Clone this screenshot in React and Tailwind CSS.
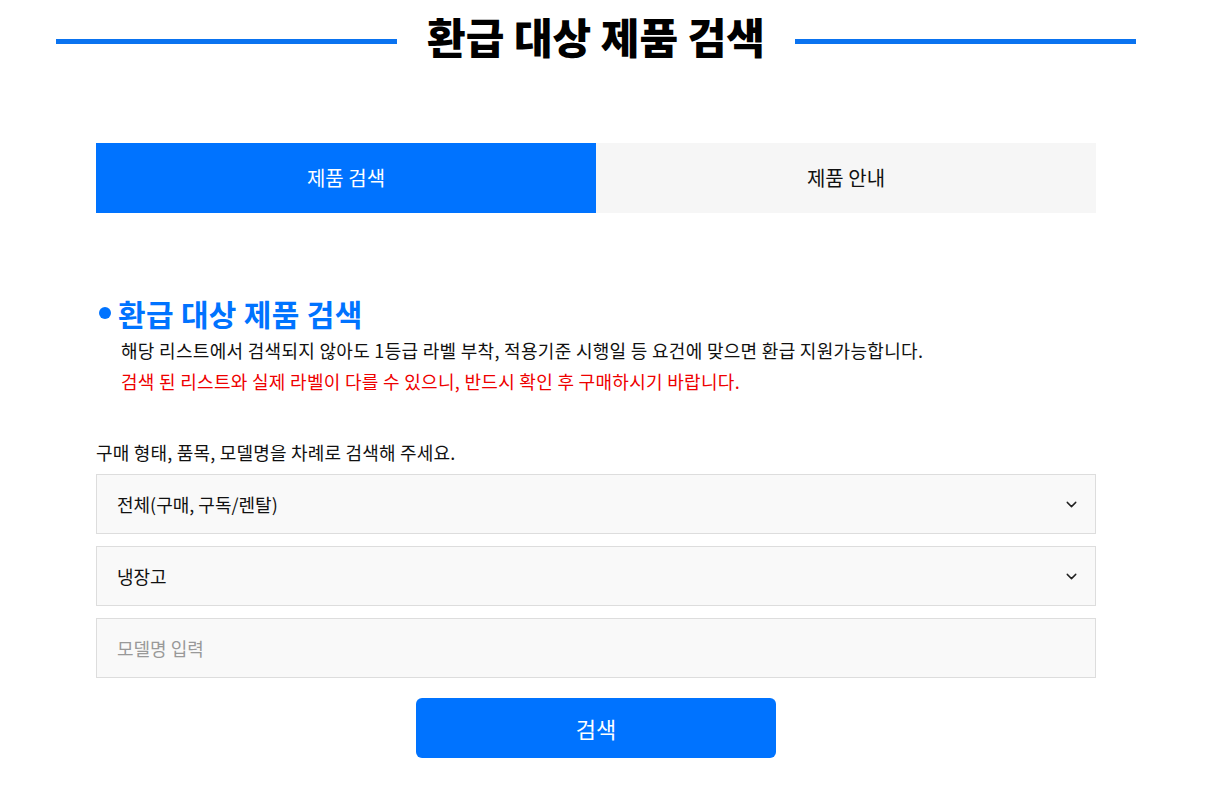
import { ChevronDown } from 'lucide-react';

const FONT = { fontFamily: '"Noto Sans CJK KR", "Noto Sans", sans-serif' };

function SelectBox({ value }) {
  return (
    <div className="flex h-[60px] items-center justify-between border border-[#dddddd] bg-[#f9f9f9] pl-5 pr-[15px] text-[18px] text-[#111]">
      <span>{value}</span>
      <ChevronDown size={17} strokeWidth={2} className="text-[#222]" />
    </div>
  );
}

export default function App() {
  return (
    <div className="min-h-[788px] w-[1192px] bg-white" style={FONT}>
      <div className="flex items-center px-[56px] pt-[12px]">
        <div className="mt-[10px] h-[5px] flex-1 bg-[#0a73f0]" />
        <h1 className="px-[30px] text-[42px] font-black leading-[48px] text-black">
          환급 대상 제품 검색
        </h1>
        <div className="mt-[10px] h-[5px] flex-1 bg-[#0a73f0]" />
      </div>

      <div className="mx-auto mt-[83px] w-[1000px]">
        <div className="flex h-[70px] text-[20px]">
          <div className="flex flex-1 items-center justify-center bg-[#0073ff] text-white">
            제품 검색
          </div>
          <div className="flex flex-1 items-center justify-center bg-[#f6f6f6] text-[#111]">
            제품 안내
          </div>
        </div>

        <div className="mt-[80px]">
          <div className="flex items-center gap-[7px]">
            <span className="ml-[3px] h-[12px] w-[12px] rounded-full bg-[#0073ff]" />
            <h2 className="text-[30px] font-bold leading-[40px] tracking-[0.3px] text-[#0073ff]">
              환급 대상 제품 검색
            </h2>
          </div>
          <p className="mt-[2px] pl-[25px] text-[18px] leading-[31px] tracking-[0.3px] text-[#111]">
            해당 리스트에서 검색되지 않아도 1등급 라벨 부착, 적용기준 시행일 등 요건에 맞으면 환급 지원가능합니다.
          </p>
          <p className="pl-[25px] text-[18px] leading-[31px] tracking-[0.3px] text-[#ee0000]">
            검색 된 리스트와 실제 라벨이 다를 수 있으니, 반드시 확인 후 구매하시기 바랍니다.
          </p>
        </div>

        <p className="mt-[40px] text-[18px] leading-[30px] tracking-[0.2px] text-[#111]">
          구매 형태, 품목, 모델명을 차례로 검색해 주세요.
        </p>

        <div className="mt-[7px] flex flex-col gap-[12px]">
          <SelectBox value="전체(구매, 구독/렌탈)" />
          <SelectBox value="냉장고" />
          <input
            placeholder="모델명 입력"
            className="h-[60px] border border-[#dddddd] bg-[#f9f9f9] px-5 text-[18px] text-[#111] outline-none placeholder:text-[#999]"
            style={FONT}
          />
        </div>

        <div className="mt-[20px] flex justify-center">
          <button className="h-[60px] w-[360px] rounded-[6px] bg-[#0073ff] text-[22px] text-white" style={FONT}>
            검색
          </button>
        </div>
      </div>
    </div>
  );
}
